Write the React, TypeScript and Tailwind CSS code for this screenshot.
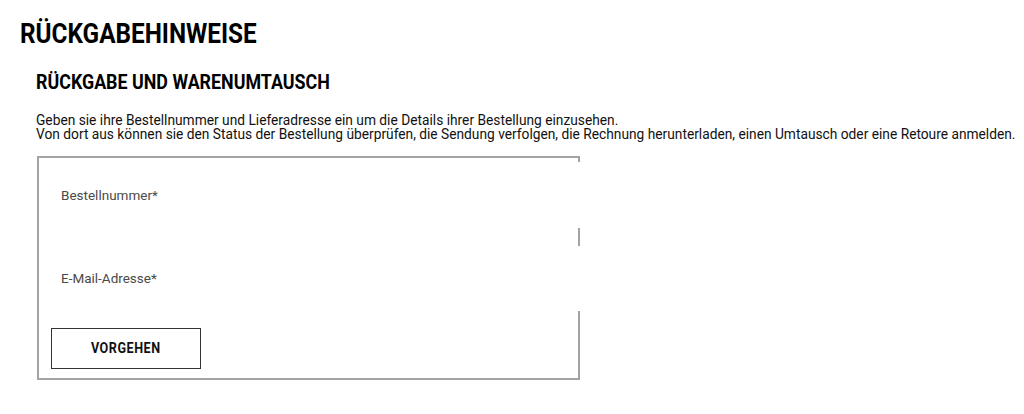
function Field({ label, height }: { label: string; height: string }) {
  return (
    <label className={`relative -mr-1 flex items-center bg-white pl-[10px] ${height}`}>
      <span className="text-[13.5px] text-[#4a4a4a]">{label}</span>
      <input className="absolute inset-0 bg-transparent outline-none" aria-label={label} />
    </label>
  );
}

export default function App() {
  return (
    <div className="min-h-screen bg-white pl-5 pt-[18px] text-black" style={{ fontFamily: "Roboto, sans-serif" }}>
      <h1 className="origin-left scale-x-90 text-[27px] font-bold leading-[32px]">RÜCKGABEHINWEISE</h1>

      <section className="ml-4 mt-[19px]">
        <h2 className="origin-left scale-x-85 text-[21px] font-bold leading-[26px]">RÜCKGABE UND WARENUMTAUSCH</h2>

        <p className="mt-[18px] text-[13.75px] leading-[14px] text-[#111]">
          Geben sie ihre Bestellnummer und Lieferadresse ein um die Details ihrer Bestellung einzusehen.
          <br />
          Von dort aus können sie den Status der Bestellung überprüfen, die Sendung verfolgen, die Rechnung herunterladen, einen Umtausch oder eine Retoure anmelden.
        </p>

        <form className="ml-px mt-[15px] flex w-[543px] flex-col border-2 border-[#a3a3a3] pb-[9px] pl-3 pt-1">
          <Field label="Bestellnummer*" height="h-[66px]" />
          <div className="mt-[18px]">
            <Field label="E-Mail-Adresse*" height="h-[65px]" />
          </div>
          <button
            type="button"
            className="mt-[17px] flex h-[41px] w-[150px] items-center justify-center border border-[#333] bg-white"
          >
            <span className="scale-x-90 text-[14px] font-bold tracking-[0.6px] text-[#111]">VORGEHEN</span>
          </button>
        </form>
      </section>
    </div>
  );
}
